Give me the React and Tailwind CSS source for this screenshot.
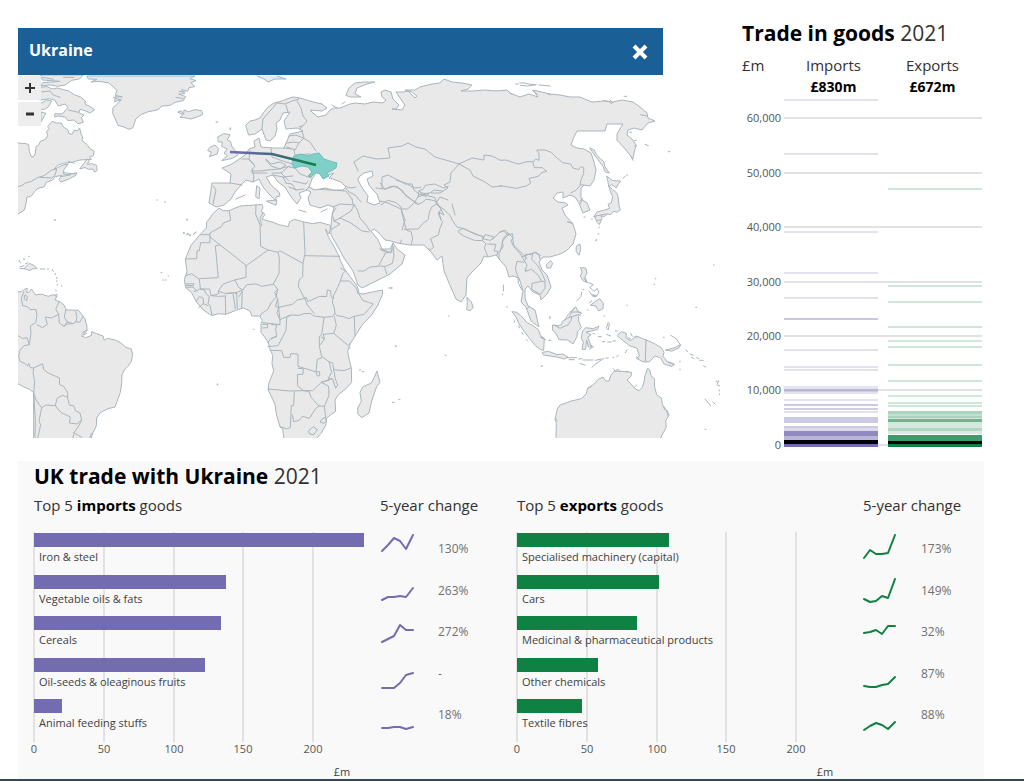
import React from 'react';

// Each region is drawn on its own grid at three units per map unit
const regions = [
  {
    name: 'North Atlantic',
    transform: 'translate(0 20) scale(0.33333)',
    land: [
      'M50 367 L66 371 75 370 86 374 88 395 94 410 101 410 106 400 108 380 117 374 121 364 136 358 143 347 140 335 147 326 143 320 156 304 169 309 184 309 190 321 204 330 206 340 216 343 222 331 232 332 239 324 243 342 248 350 246 361 262 375 270 386 282 393 280 407 268 412 275 418 240 420 215 427 190 430 172 436 162 448 190 435 205 432 192 448 190 462 205 464 230 458 228 466 205 478 182 486 177 478 186 466 165 470 158 480 139 487 133 500 112 506 104 515 92 530 81 531 78 551 73 570 50 585Z',
      'M240 446 L252 430 262 417 268 422 262 433 275 431 290 436 291 452 283 456 280 447 265 448 256 443Z',
      'M120 202 L140 200 158 207 172 204 190 209 207 213 222 224 242 231 256 243 255 252 272 261 284 269 270 279 255 272 240 268 236 278 252 285 244 293 250 307 234 311 221 300 204 302 196 291 173 288 164 291 165 281 187 282 204 262 195 252 175 258 164 240 148 236 120 240Z',
      'M122 165 L250 165 238 177 215 181 196 195 173 199 151 195 122 198 128 188 180 184 128 180Z',
      'M122 250 L140 240 155 243 145 260 134 268 122 268Z M124 276 L138 280 124 304Z',
      'M262 168 L585 168 570 176 588 182 573 188 584 200 567 203 563 214 545 209 554 221 536 222 557 230 550 242 525 247 511 256 486 258 474 269 442 276 424 283 407 297 399 323 387 328 372 321 354 316 346 297 338 280 339 263 350 254 364 239 344 245 346 230 367 231 346 226 351 211 339 200 327 189 298 184 273 186 291 178 266 177Z',
      'M534 276 L544 272 551 283 552 270 566 275 584 269 605 272 608 284 588 292 573 297 551 293 540 292 548 284Z',
      'M655 350 L671 341 690 344 682 360 692 365 695 378 705 391 714 405 697 415 665 422 682 407 672 399 682 387 665 379 667 367 655 365Z',
      'M630 382 L645 375 655 386 652 402 628 410 634 396 624 392Z',
    ],
    borders: [
      'M50 500 L66 497 76 489 95 484 112 473 132 467 155 450 170 447 165 466 155 474 120 472',
      'M190 458 L225 462 M205 424 L223 430 M182 470 L210 465',
      'M125 216 L150 213 158 224 180 232 M205 270 L236 277 M128 172 L160 178 M190 172 L222 172',
      'M340 232 L362 240 M528 232 L550 236 M538 214 L555 216 M650 306 h2 M692 324 v3 M470 540 h3 M494 546 h3 M165 600 h2 M560 600 h2',
    ],
  },
  {
    name: 'South America',
    transform: 'translate(0 220) scale(0.33333)',
    land: [
      'M50 216 L65 215 71 209 82 205 80 218 88 216 94 207 102 218 107 225 123 222 145 229 160 224 170 230 165 240 181 246 193 256 199 270 213 270 235 271 247 285 255 297 261 319 260 333 244 348 257 353 275 346 275 335 290 341 309 348 313 361 322 355 349 361 364 370 377 382 394 387 398 403 394 425 384 439 373 450 366 465 365 490 361 517 354 537 345 561 324 566 301 578 290 594 289 618 279 638 272 660 101 660 101 518 89 508 70 500 50 489Z',
      'M73 145 L88 130 102 136 111 145 97 147 91 151Z',
    ],
    borders: [
      'M72 215 L64 235 68 257 83 260 90 269 108 268 111 286 107 308 91 318 93 340 88 374 72 377 60 391 56 407 60 424 75 431 82 438 86 430 91 443 101 444 99 460 104 482 101 520',
      'M50 344 L68 356 81 353 88 373 M111 314 L127 323 142 313 136 291 155 294 176 283 167 267 177 247',
      'M176 283 L178 309 192 319 202 306 193 292 197 270 M202 306 L219 311 228 305 231 291 227 275 M228 305 L239 307 249 290 M192 319 L202 312 219 311',
      'M101 444 L128 431 131 449 145 459 165 468 178 474 179 494 191 499 203 518 203 534 208 555 222 558 226 572 240 579 245 600 231 612 208 609 211 591 184 578 171 564 166 555 172 534 188 526 203 532',
      'M101 520 L108 540 125 563 138 555 165 557 M125 563 L117 604 122 614 112 660 M245 600 L236 618 222 638 218 660 M222 638 L245 652 M275 640 L268 656 M101 520 L106 600 105 660',
      'M76 225 L82 230 80 242 73 237Z M247 338 L262 330 M250 345 L260 340',
      'M57 121 l5 8 M70 117 l4 1 M86 109 h2 M60 146 h14 M60 141 l12 -4 M76 132 l8 -4 M121 147 h13 M142 147 h4 M157 148 l3 6 M166 160 v4 M170 172 v4 M169 183 h3 M172 193 v2 M184 198 h2 M168 210 v3 M163 226 l8 -3 v6',
      'M483 158 h3 M504 168 h2 M488 180 h2 M495 180 h3 M550 40 h3 M560 43 h5 M568 46 h3 M580 42 l8 -5 M652 492 v3 M162 0 h3',
    ],
  },
  {
    name: 'Africa',
    transform: 'translate(180 190) scale(0.33333)',
    land: [
      'M118 55 L130 62 148 62 180 48 228 45 246 43 249 54 243 64 255 73 246 87 261 92 280 97 296 104 325 110 329 95 344 88 371 96 398 101 420 97 451 106 451 117 447 132 436 117 446 142 462 169 475 195 483 216 493 236 508 257 530 286 537 304 532 309 548 312 578 306 608 300 607 314 594 345 575 375 547 404 526 437 509 464 503 485 508 510 514 535 515 577 498 596 475 614 465 630 467 664 450 676 440 684 437 707 423 730 409 746 312 746 308 716 300 711 289 671 285 643 265 600 266 581 281 543 276 521 278 496 268 472 265 456 243 427 243 401 247 391 239 378 216 378 210 363 190 354 173 359 137 373 115 371 95 377 70 360 49 335 34 307 17 293 13 268 21 246 16 207 33 166 61 133 79 114 80 97 99 71Z',
      'M591 544 L600 577 590 590 575 633 567 669 545 683 534 673 533 654 544 634 540 607 548 591 574 579 582 564Z',
    ],
    borders: [
      'M148 64 L152 91 130 99 124 110 90 129 90 158 62 158 58 182 51 183 50 206 16 207 M62 134 h27 M90 141 L198 226 198 262 164 270 152 274 129 283 115 303 117 310 107 314 93 317 89 297 61 297 58 266 115 263 106 168 119 165',
      'M228 45 L227 73 240 104 242 169 264 180 198 228 M249 67 L240 85 245 107 M264 180 L294 187 299 182 369 220 375 190 371 96 M375 197 L479 199 M369 220 L368 261 358 269 355 289 363 305 374 325 352 330 337 343 296 352 293 328 284 307 293 298 280 282 297 250 298 205 294 187',
      'M17 257 L35 251 58 268 M17 282 L42 281 40 287 19 286 M19 292 L40 291 49 303 42 305 M49 303 L58 297 M61 297 L72 299 78 311 88 320 84 341 90 346 96 375 M49 335 L58 319 70 325 70 341 56 353 M70 341 L84 347 M93 317 L116 319 136 318 M136 318 L137 373 M139 310 L159 309 166 356 M166 311 L170 308 172 355 M177 320 L187 303 185 354 M115 303 L136 311 172 307 189 299 M164 270 L176 292 189 300 200 284 229 282 245 289 280 283',
      'M293 298 L288 322 273 339 263 359 247 369 240 379 M293 328 L286 350 296 352 291 370 300 389 300 404 248 398 M274 403 L290 405 287 418 290 437 274 447 M248 403 L263 403 263 413 246 414 M263 458 L273 445 290 440 M264 470 L294 467 309 439 318 421 320 383 332 375 357 376 372 371 390 370 402 378 432 382 430 399 425 434 418 440 418 469 425 499 M300 389 L308 385 332 375',
      'M296 352 L300 389 M374 325 L379 322 384 335 418 319 440 320 442 300 452 302 453 320 462 325 M374 325 L382 345 402 370 M482 235 L497 242 488 252 481 273 473 292 461 316 457 336 463 354 465 370 457 380 430 382 M481 273 L508 273 527 292 534 307 M534 307 L548 331 580 342 552 373 523 379 507 386 490 380 471 377 465 370 M523 379 L524 414 525 437 M463 380 L469 406 461 430 505 467 M430 433 L461 430 M430 433 L433 447 422 463 M424 441 L434 447 M425 499 L447 515 458 519 461 539 491 542 514 534',
      'M270 481 L305 482 311 502 330 502 332 491 354 492 354 529 370 534 390 540 408 546 411 557 419 558 419 545 408 546 412 508 425 504 M354 535 L370 536 369 553 352 553 353 588 371 602 398 602 424 577 447 571 M263 597 L330 603 371 602 M343 605 L341 646 334 646 331 712 320 717 301 710 M337 675 L341 695 358 691 367 679 388 685 406 657 417 648 433 649 M371 602 L387 605 394 623 417 648 M424 577 L446 589 447 617 433 649 437 683 M447 515 L455 547 445 565 458 567 467 595 473 585 466 566 461 539 M424 577 L455 566 M386 722 L400 710 412 719 401 734 390 732Z M425 688 L434 683 440 692 431 700 422 697Z',
      'M10 128 h3 M21 132 h6 M29 135 h3 M42 132 l7 -6 M20 88 h3 M220 418 h2 M510 460 v4 M508 474 h3 M538 540 h4 M546 545 h5 M630 294 h7 M637 637 h5 M656 628 h4 M646 469 h2 M112 583 h2',
    ],
  },
  {
    name: 'Indian Ocean',
    transform: 'translate(380 180) scale(0.33333)',
    land: [
      'M261 352 L274 366 280 383 270 392 260 389 262 370Z',
      'M397 395 L410 397 422 406 440 427 458 436 475 449 482 467 493 475 491 511 482 509 466 497 449 476 433 455 417 432 409 413Z',
      'M500 253 L512 242 518 250 512 264 502 264Z',
    ],
    borders: [
      'M3 75 L22 61 47 67 63 81 66 100 73 128 79 150 93 155 98 175 93 195 M66 87 L83 87 104 67 114 73 M73 148 L115 147 128 131 145 118 148 96 156 80 169 73 190 87',
      'M0 8 L15 28 30 20 53 20 70 39 90 55 107 70 M48 0 L63 5 80 10 92 19 105 24 122 22 M104 67 L115 48 117 32 130 27 136 16 164 12 191 24 205 18 M118 32 L128 45 153 37 161 30 187 33 M112 52 L132 44 165 53 171 71',
      'M122 39 L147 41 138 49 121 44 M114 73 L128 67 138 57 164 62 176 77',
      'M171 71 L184 88 174 99 184 121 188 125 180 145 175 165 152 176 161 201 152 210 146 205 M191 88 L212 108 217 121 231 141 247 145 276 157 308 170 310 177 331 181 345 171 360 155 375 151 387 162 398 173 401 195 411 206 429 223 439 234',
      'M237 151 L250 145 281 161 310 170 307 182 283 181 251 168 237 158Z M311 173 L315 164 340 170 338 177 M308 182 L318 192 313 203 323 229 M323 192 L348 193 342 213 354 214 350 227 M387 162 L366 185 370 199 357 218 357 236',
      'M439 234 L431 247 411 244 406 267 414 290 415 310 425 329 M439 234 L432 228 463 218 477 224 480 238 M425 230 L441 255 435 274 455 268 475 286 485 304 493 305 M458 220 L455 238 472 255 485 278 495 301 495 325 481 343 455 328 456 310 485 304 M441 272 L435 268',
      'M441 387 L448 379 M545 435 L566 402 585 382 600 405 M3 258 L15 260 37 250 42 228 40 200 M0 207 L20 219 35 215 37 207 M14 263 L20 281',
      'M370 315 v18 M368 342 v3 M381 379 v3 M403 422 v5 M416 438 l3 6 M425 457 l4 6 M440 479 l3 4 M27 324 h8 M205 408 h2 M46 498 h3 M195 526 h3 M484 558 h3 M509 410 v4 M507 481 h4 M564 126 l14 4 M485 470 l8 8 M60 190 L65 180',
    ],
  },
  {
    name: 'Oceania',
    transform: 'translate(500 240) scale(0.33333)',
    land: [
      'M168 600 L169 550 165 538 172 507 180 495 195 490 214 483 244 476 259 461 263 445 278 436 295 418 309 411 317 423 327 423 333 405 343 393 366 394 395 397 393 409 381 420 393 432 406 447 417 452 427 442 432 426 435 407 443 385 449 389 453 407 463 416 464 442 470 464 485 475 487 493 498 509 505 528 497 543 499 562 486 585 480 600Z',
      'M352 286 L364 275 379 280 378 294 392 302 409 288 430 297 460 309 484 323 492 337 489 349 503 366 522 373 516 379 493 373 481 353 464 348 449 365 430 366 409 355 419 348 410 324 390 318 368 301Z',
      'M159 255 L176 257 185 254 187 244 206 233 217 212 227 200 235 216 245 219 235 230 237 246 244 263 232 276 231 290 219 312 202 300 177 299 167 279 158 271Z',
      'M128 337 L145 334 171 344 188 342 203 351 193 357 169 351 148 348 131 345Z',
      'M249 272 L257 263 280 266 297 258 293 268 275 273 258 276 273 285 263 291 275 321 265 321 260 300 257 328 246 328 250 307 244 295Z',
      'M242 83 L257 84 261 99 255 110 261 128 249 122 241 108 246 97Z',
      'M272 195 L286 184 299 176 310 190 309 206 296 213 288 199Z',
      'M230 18 L240 12 242 28 237 46 229 35Z',
      'M497 330 L522 324 542 314 537 324 517 333Z',
    ],
    borders: [
      'M438 298 L436 364 M162 255 L180 265 205 254 213 241 215 230 236 224 M206 233 L215 230 M210 216 L240 216',
      'M200 353 h30 M207 359 h16 M236 357 l10 -1 M249 360 h30 M241 371 l14 4 M276 382 L288 371 311 355 M286 361 L303 357 M318 354 h7 M338 352 h3 M350 350 l5 -4 M376 338 l5 -9 M409 350 l7 5',
      'M230 183 L243 169 245 157 M249 149 h3 M261 126 l19 8 -11 9 14 11 8 -9 6 12 -9 13 -10 -7 M267 153 l12 17 11 -2 M269 189 l7 -8 M252 115 l8 11 M262 210 h2 M312 228 h2 M278 166 h9',
      'M325 247 L319 264 325 270 328 251 M320 283 l12 5 M307 305 h7 M323 306 h11 M339 303 h8 M295 290 h9 M279 281 h4 M346 273 h5 M392 280 l5 9 M384 292 l8 5 M403 291 h8 M268 328 L280 320 269 313',
      'M512 286 L529 296 541 315 M490 292 h3 M558 330 l5 5 M570 342 l10 4 M574 351 l8 5 M590 353 l7 3 M600 361 h10 M611 378 l6 3 M540 363 v3 M540 387 v3 M505 366 l14 4 M516 378 l8 -6',
      'M648 424 l8 -1 -5 11 8 4 M658 450 v3 M659 461 v3 M615 477 l17 20 M639 486 l6 6 M615 568 h3 M461 133 h3 M467 115 v2 M381 195 v2 M587 202 h3 M640 75 h2 M150 231 v4 M147 301 h4 M124 379 h2',
      'M340 386 l6 8 7 -7 7 8 M376 395 l8 -1 M404 441 l6 -6 M263 445 l12 -7 M501 511 l6 15 M166 535 l5 7 M490 500 l5 10 M120 291 l16 8 M287 0 h3',
    ],
  },
  {
    name: 'Far East',
    transform: 'translate(500 70) scale(0.33333)',
    land: [
      'M270 234 L283 240 288 253 302 267 312 276 314 289 328 309 316 306 309 289 294 269 280 250Z',
      'M321 319 L338 332 362 333 355 342 349 354 335 344 326 350 324 336Z',
      'M328 350 L338 359 350 369 355 383 357 407 361 420 351 427 341 424 332 434 321 432 313 440 303 437 306 445 298 464 289 454 286 441 281 441 291 426 314 420 329 415 324 403 334 399 338 380 332 367Z',
    ],
    borders: [
      'M0 271 L18 270 41 278 56 282 81 275 98 275 103 293 127 293 140 304 124 308 118 317 103 322 87 325 92 339 79 348 49 355 20 350 0 347',
      'M100 275 L107 267 117 271 117 250 110 240 135 240 154 247 170 263 188 278 212 282 219 294 236 299 242 290 251 293 251 311 243 329 240 347 228 361 212 369 M243 345 L249 344 M240 393 L249 385',
      'M0 487 L10 483 25 495 37 491 39 503 33 513 42 531 59 550 69 562 77 553 94 553 106 546 121 556 M22 492 L10 505 5 528 0 545',
      'M47 42 h8 M59 39 L74 39 92 43 109 44 82 48 62 46 M117 45 L150 48 M372 79 h8 M435 223 l10 4 M505 245 h5 M369 325 l7 -7 M380 315 h3 M252 441 h4 M274 447 h3 M297 471 v3 M294 492 h3 M287 513 l3 -4',
      'M98 62 l13 10 M26 65 l10 8 M142 71 l8 4 M310 92 l16 2 9 7 M330 90 l8 8 M421 134 L440 138 M389 187 h6 M404 212 l5 -1 M405 228 h5 M392 258 l7 13 M240 402 l7 -13 M202 455 L218 460 M283 439 L319 432 M290 452 l11 -3',
    ],
  },
];

const eurasia =
  'M246 125 L250 121 255 120 260 118 264 112 268 107 274 103 282 101 287 99 293 97 300 98 313 102 322 104 327 108 322 111 310 110 314 114 318 117 326 115 330 110 334 108 340 108 350 104 355 103 365 104 373 102 383 103 386 100 382 97 381 92 385 90 391 92 393 99 399 105 396 109 392 109 402 110 405 105 400 98 396 92 403 92 408 91 415 98 417 96 412 92 405 90 415 90 420 87 432 84 440 83 444 79 452 82 462 83 472 85 468 89 461 91 473 91 485 90 496 91 507 90 510 93 520 97 529 94 538 97 533 90 550 94 560 95 570 97 580 97 587 100 592 102 604 101 613 102 622 100 633 102 640 107 647 113 648 118 655 121 648 123 642 130 634 128 628 130 627 135 632 139 636 145 634 153 633 159 626 150 617 140 617 134 623 124 614 124 607 124 605 131 592 131 577 131 573 139 571 145 577 148 584 149 591 153 594 162 596 170 594 180 590 186 584 185 581 188 581 199 587 203 590 210 583 213 579 203 575 197 570 195 563 198 563 192 557 193 553 198 558 202 566 203 568 205 562 208 565 215 573 224 576 234 573 244 566 251 560 254 550 257 543 257 539 262 542 270 547 275 551 287 547 294 541 300 540 295 533 292 528 286 525 289 525 298 528 306 535 310 539 327 531 321 526 307 521 302 523 291 519 278 513 276 509 277 506 267 500 260 496 255 488 257 484 256 481 263 472 272 467 278 466 295 461 302 456 299 449 283 444 271 442 256 437 260 431 252 424 245 410 245 397 243 391 241 385 240 379 233 374 229 371 231 378 240 382 249 390 249 393 243 397 249 405 255 402 264 390 274 380 279 362 288 358 285 353 271 344 258 338 247 331 235 331 226 332 216 334 207 328 205 320 208 310 205 308 198 311 192 307 190 299 193 301 198 297 204 292 198 288 192 285 187 278 182 273 175 266 177 271 185 279 192 280 196 276 197 276 201 270 195 263 187 259 179 253 182 246 180 241 185 235 192 231 199 224 205 216 207 209 203 212 183 230 183 231 174 222 168 230 165 238 160 245 155 249 149 255 147 254 141 259 138 261 147 272 148 284 148 287 141 290 134 303 131 297 128 286 129 284 121 288 115 290 112 283 113 280 120 276 123 277 129 275 136 270 141 266 140 262 129 255 134 249 135Z';

const eurasiaBorders = [
  'M262 129 L263 119 270 111 277 103 285 104 292 101 299 99 M288 112 L286 105 M297 101 L301 108 303 116 307 121 300 129',
  'M289 136 L296 135 303 138 M287 143 L294 142 299 143 304 138 302 131 M299 143 L295 150 287 147 M303 138 L310 142 316 151 M294 150 L295 155 310 154 M271 148 L272 157 280 160 286 162 292 164 M284 148 L291 149',
  'M250 151 L249 159 255 166 252 170 M242 159 L248 159 254 164 M252 170 L254 176 253 182 M251 171 L260 171 268 170 M266 159 L271 164 280 162 286 165 280 169 271 166 266 160 M268 170 L279 169 290 166 M272 173 L281 173 288 167 M273 175 L283 177 286 183 M281 173 L289 181 M289 167 L295 168 300 174 311 178 M293 181 L306 184 308 181 M289 187 L296 190 304 189 M286 183 L292 184 296 190 M283 177 L293 176 M252 173 L267 173 M213 186 L216 190 213 204 M230 183 L242 185',
  'M312 179 L322 172 M306 190 L309 187 M309 187 L313 189 330 190 345 191 M341 185 L351 188 356 187 M345 187 L349 192 355 195 M346 191 L352 199 M333 207 L340 204 355 205 M340 218 L334 221 332 214 336 208 M340 218 L351 211 354 205 357 209 360 218 366 225 370 231 M340 218 L351 223 362 231 369 232 M334 221 L340 224 332 229 M353 204 L352 199 M386 252 L379 265 M358 271 L364 271 370 267 380 266 M381 249 L391 253 393 243',
  'M354 162 L363 156 377 159 390 158 388 148 402 146 408 143 416 147 425 149 435 157 442 159 449 161 459 164 472 158 484 160 484 155 492 156 500 160 M459 164 L451 173 450 182 444 185 448 188 440 193 431 193 M459 164 L470 170 473 176 485 182 492 187 502 186 M354 162 L358 171 M382 189 L382 177 388 175 400 181 405 184 412 184 414 190 420 195 M376 188 L386 189 394 186 402 190 406 196 417 203 M355 195 L361 202',
  'M402 230 L405 220 401 209 388 203 380 201 M438 204 L444 215 439 212 441 220 M452 204 L455 215 M436 203 L440 197 448 200',
];

const islets = [
  'M257 76 L264 79 268 82 275 79 286 79 277 76',
  'M346 95 L349 88 355 83 364 82 375 82 367 84 357 88 355 94 361 97 351 97Z',
  'M257 186 L260 188 259 199 256 197Z M267 201 L277 200 276 205Z M299 210 L306 212 M321 212 L327 209 M236 199 L245 195 M255 205 l2 2 M216 122 h1 M230 128 v2 M332 105 l5 3 M342 104 l3 -2 M299 127 l3 -1',
];

const importGoods = [
  { name: 'Iron & steel', width: 330, change: '130%', trend: '348,20 354,14 360,7 366,10 372,18 379,4' },
  { name: 'Vegetable oils & fats', width: 192, change: '263%', trend: '348,69 354,66 360,66 366,65 372,66 379,57' },
  { name: 'Cereals', width: 187, change: '272%', trend: '348,111 354,108 360,105 366,94 372,99 379,99' },
  { name: 'Oil-seeds & oleaginous fruits', width: 171, change: '-', trend: '348,157 354,157 360,157 366,152 372,144 379,142' },
  { name: 'Animal feeding stuffs', width: 28, change: '18%', trend: '348,197 354,197 360,196 366,196 372,198 379,196' },
];

const exportGoods = [
  { name: 'Specialised machinery (capital)', width: 152, change: '173%', trend: '347,27 353,19 359,23 365,23 371,22 378,4' },
  { name: 'Cars', width: 142, change: '149%', trend: '347,68 353,71 359,70 365,65 371,67 378,48' },
  { name: 'Medicinal & pharmaceutical products', width: 120, change: '32%', trend: '347,102 353,101 359,99 365,103 371,95 378,95' },
  { name: 'Other chemicals', width: 81, change: '87%', trend: '347,155 353,156 359,156 365,154 371,153 378,146' },
  { name: 'Textile fibres', width: 65, change: '88%', trend: '347,199 353,195 359,192 365,194 371,198 378,191' },
];

const rowTops = [2, 44, 85, 127, 168];
const valueTicks = [
  { x: 0, label: '0' },
  { x: 70, label: '50' },
  { x: 140, label: '100' },
  { x: 209, label: '150' },
  { x: 279, label: '200' },
];

const stripTicks = [
  { y: 21, label: '60,000' },
  { y: 76, label: '50,000' },
  { y: 130, label: '40,000' },
  { y: 185, label: '30,000' },
  { y: 239, label: '20,000' },
  { y: 293, label: '10,000' },
  { y: 348, label: '0' },
];

// [top, height, opacity]
const importStrips = [
  [2, 2, 0.2], [56, 2, 0.2], [134, 2, 0.2], [175, 2, 0.2], [200, 2, 0.2], [221, 2, 0.38], [252, 2, 0.2],
  [269, 2, 0.2], [272, 2, 0.2], [289, 3, 0.2], [292, 3, 0.36], [295, 2, 0.2], [302, 2, 0.2], [307, 2, 0.36],
  [311, 2, 0.34], [314, 2, 0.2], [320, 6, 0.36], [329, 2, 0.36], [331, 3, 0.25], [334, 5, 0.8], [339, 4, 0.5],
  [347, 3, 1],
];
const exportStrips = [
  [91, 2, 0.2], [188, 2, 0.2], [204, 2, 0.2], [229, 2, 0.2], [243, 2, 0.2], [249, 2, 0.2], [267, 2, 0.2],
  [283, 2, 0.2], [298, 2, 0.2], [305, 2, 0.2], [308, 2, 0.2], [314, 3, 0.35], [317, 2, 0.25], [319, 2, 0.35],
  [321, 1, 0.2], [322, 3, 0.6], [325, 6, 0.18], [331, 3, 0.33], [334, 3, 0.16], [338, 6, 0.8], [347, 3, 1],
];

const WorldMap = () => (
  <svg viewBox="18 75 702 363" className="block w-full" role="img" aria-label="Map of trade between the UK and Ukraine">
    <defs>
      <linearGradient id="route" gradientUnits="userSpaceOnUse" x1="230" y1="0" x2="316" y2="0">
        <stop offset="0" stopColor="#746cb1" />
        <stop offset="0.5" stopColor="#43687f" />
        <stop offset="1" stopColor="#0f8243" />
      </linearGradient>
    </defs>
    <g fill="#e9e9e9" stroke="#a9b5bc" strokeWidth="1" strokeLinejoin="round" strokeLinecap="round">
      <path d={eurasia} />
      <path d={eurasiaBorders.join(' ')} fill="none" />
      <path d={islets.join(' ')} />
      {regions.map((region) => (
        <g key={region.name} transform={region.transform} strokeWidth="3">
          <path d={region.land.join(' ')} />
          <path d={region.borders.join(' ')} fill="none" />
        </g>
      ))}
      {/* Black Sea and Caspian */}
      <path
        fill="#fff"
        d="M316 173 L312 179 309 187 315 190 325 188 333 190 343 190 346 187 341 182 333 179 329 178 334 173 328 175 324 179 320 174Z M360 176 L364 173 372 171 373 176 367 179 369 185 373 190 377 194 380 203 374 205 367 202 368 196 361 186 358 180Z"
      />
      <path
        fill="#7ed0c9"
        stroke="#74bcb9"
        d="M294 156 L300 154 308 156 313 154 319 153 324 159 330 161 337 163 336 168 329 172 327 173 329 176 323 179 320 174 316 172 311 177 308 176 312 172 308 167 302 166 294 168 292 164Z"
      />
    </g>
    <path d="M230 152 L272 154 316 165" fill="none" stroke="url(#route)" strokeWidth="2.5" />
  </svg>
);

const StripChart = () => (
  <svg viewBox="0 0 240 354" className="block w-full font-['Open_Sans',sans-serif]" role="img" aria-label="Trade in goods by country">
    {stripTicks.map((tick) => (
      <g key={tick.label}>
        <line x1="42" x2="240" y1={tick.y} y2={tick.y} stroke="#e2e2e2" strokeWidth="2" />
        <text x="39" y={tick.y + 4} textAnchor="end" fontSize="11" fill="#555">{tick.label}</text>
      </g>
    ))}
    {importStrips.map(([y, h, opacity]) => (
      <rect key={y} x="42" y={y} width="94" height={h} fill="#746cb1" opacity={opacity} />
    ))}
    {exportStrips.map(([y, h, opacity]) => (
      <rect key={y} x="146" y={y} width="94" height={h} fill="#0f8243" opacity={opacity} />
    ))}
    <rect x="42" y="343" width="94" height="4" fill="#000" />
    <rect x="146" y="344" width="94" height="3" fill="#000" />
  </svg>
);

const GoodsChart = ({ goods, kind, color }) => (
  <section>
    <div className="flex text-[15px] leading-5 text-[#323132]">
      <h3 className="w-[346px] shrink-0">
        Top 5 <b className="text-black">{kind}</b> goods
      </h3>
      <h3 className="whitespace-nowrap">5-year change</h3>
    </div>
    <svg viewBox="0 0 442 247" className="mt-4 block w-full overflow-visible font-['Open_Sans',sans-serif]" role="img" aria-label={`Top 5 ${kind} goods in £m`}>
      {valueTicks.map((tick) => (
        <g key={tick.label}>
          <line x1={tick.x} x2={tick.x} y1="1" y2="211" stroke="#e2e2e2" strokeWidth="2" />
          <text x={tick.x} y="222" textAnchor="middle" fontSize="11" fill="#555">{tick.label}</text>
        </g>
      ))}
      {goods.map((item, index) => (
        <g key={item.name}>
          <rect x="0" y={rowTops[index]} width={item.width} height="14" fill={color} />
          <text x="5" y={rowTops[index] + 28} fontSize="11" fill="#414042">{item.name}</text>
          <polyline points={item.trend} fill="none" stroke={color} strokeWidth="2" strokeLinejoin="round" strokeLinecap="round" />
          <text x="404" y={rowTops[index] + 20} fontSize="12" fill="#707070">{item.change}</text>
        </g>
      ))}
      <text x="308" y="245" textAnchor="middle" fontSize="11" fill="#414042">£m</text>
    </svg>
  </section>
);

const App = () => {
  return (
    <div className="min-h-screen border-b-2 border-[#33475b] bg-white font-['Open_Sans',sans-serif] text-[#323132]">
      <div className="flex gap-[22px] pl-[18px] pr-[42px]">
        {/* Map */}
        <main className="min-w-0 flex-1 pt-7">
          <header className="mr-[57px] flex h-[47px] items-center justify-between bg-[#1b5f97] pl-[11px] pr-[15px] text-white">
            <h1 className="pb-[3px] text-base font-bold">Ukraine</h1>
            <button type="button" aria-label="Close" className="block">
              <svg viewBox="0 0 16 16" className="h-4 w-4" fill="none" stroke="currentColor" strokeWidth="4">
                <path d="M2 2 L14 14 M14 2 L2 14" />
              </svg>
            </button>
          </header>
          <div className="relative">
            <WorldMap />
            <div className="absolute left-0 top-px flex flex-col gap-[2px]">
              <button type="button" aria-label="Zoom in" className="flex h-6 w-[23px] items-center justify-center bg-[#eee]">
                <svg viewBox="0 0 10 10" className="h-[10px] w-[10px]" stroke="#333" strokeWidth="2">
                  <path d="M5 0 V10 M0 5 H10" />
                </svg>
              </button>
              <button type="button" aria-label="Zoom out" className="flex h-6 w-[23px] items-center justify-center bg-[#eee]">
                <svg viewBox="0 0 10 10" className="h-[10px] w-[10px]" stroke="#333" strokeWidth="3">
                  <path d="M1 5 H9" />
                </svg>
              </button>
            </div>
          </div>
        </main>

        {/* All countries */}
        <aside className="w-[240px] shrink-0 pt-[19px]">
          <h2 className="whitespace-nowrap text-[21px] leading-7 text-[#323132]">
            <b className="text-black">Trade in goods</b> 2021
          </h2>
          <div className="mt-[7px] -mb-px grid grid-cols-[42px_1fr_1fr] text-[15px] leading-[22px]">
            <span>£m</span>
            <span className="text-center">Imports</span>
            <span className="text-center">Exports</span>
            <b className="col-start-2 text-center text-sm leading-[22px] text-black">£830m</b>
            <b className="text-center text-sm leading-[22px] text-black">£672m</b>
          </div>
          <StripChart />
        </aside>
      </div>

      {/* Goods breakdown */}
      <div className="ml-[18px] mr-10 mt-[10px] bg-[#f9f9f9] pb-px pl-4 pr-[25px]">
        <h2 className="text-[21px] leading-[30px]">
          <b className="text-black">UK trade with Ukraine</b> 2021
        </h2>
        <div className="mt-1 grid grid-cols-2 gap-x-[41px]">
          <GoodsChart goods={importGoods} kind="imports" color="#746cb1" />
          <GoodsChart goods={exportGoods} kind="exports" color="#0f8243" />
        </div>
      </div>
    </div>
  );
};

export default App;
